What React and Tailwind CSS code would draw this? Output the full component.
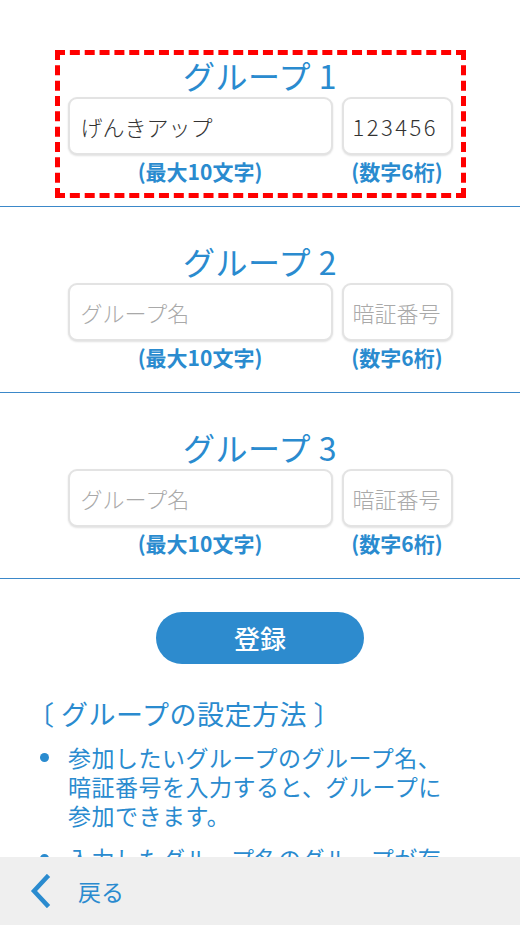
import React from "react";

const FONT = { fontFamily: '"Noto Sans CJK JP", "Noto Sans", sans-serif' };

function Group({ n, name, code, first, active }) {
  return (
    <section
      className={`${first ? "pt-[50px]" : "pt-[29px]"} pb-[8px] border-b border-[#3b88c9]`}
    >
      <div
        className={`mx-auto w-[411px] h-[148px] border-[5px] border-dashed ${
          active ? "border-[#ff0000]" : "border-transparent"
        } px-[8px] flex flex-col`}
      >
        <div className="h-[40px] leading-[40px] text-center text-[32px] text-[#2a8bcf] font-normal tracking-[0.5px]">
          グループ {n}
        </div>
        <div className="mt-[2px] flex gap-[9px]">
          <input
            readOnly
            defaultValue={name}
            placeholder="グループ名"
            className="w-[265px] h-[58px] rounded-[9px] border-2 border-[#e3e3e3] shadow-[0_1px_2px_rgba(0,0,0,0.12)] bg-white px-[11px] text-[22px] font-light text-[#333] placeholder:text-[#a9a9a9] outline-none"
            style={FONT}
          />
          <input
            readOnly
            defaultValue={code}
            placeholder="暗証番号"
            className="w-[111px] h-[58px] rounded-[9px] border-2 border-[#e3e3e3] shadow-[0_1px_2px_rgba(0,0,0,0.12)] bg-white pl-[9px] pr-[4px] text-[22px] font-light tracking-[2.5px] placeholder:tracking-normal text-[#333] placeholder:text-[#a9a9a9] outline-none"
            style={FONT}
          />
        </div>
        <div className="mt-[4px] flex gap-[9px] h-[24px] leading-[24px] text-[21px] font-bold text-[#2a8bcf]">
          <div className="w-[265px] text-center">(最大10文字)</div>
          <div className="w-[111px] text-center">(数字6桁)</div>
        </div>
      </div>
    </section>
  );
}

export default function App() {
  return (
    <div className="w-[520px] h-[925px] bg-white flex flex-col overflow-hidden" style={FONT}>
      <div className="flex-1 overflow-hidden">
        <Group n={1} name="げんきアップ" code="123456" first active />
        <Group n={2} name="" code="" />
        <Group n={3} name="" code="" />
        <div className="mt-[33px] flex justify-center">
          <button className="w-[208px] h-[52px] rounded-full bg-[#2d8bce] text-white text-[26px] font-medium leading-none">
            登録
          </button>
        </div>
        <h2 className="mt-[32px] pl-[27px] h-[36px] leading-[36px] text-[27px] tracking-[0.5px] text-[#2a8bcf] font-normal">
          〔 グループの設定方法 〕
        </h2>
        <ul className="mt-[11px] pl-[40px] pr-[20px] text-[23px] leading-[29px] text-[#2a8bcf] flex flex-col gap-[14px]">
          <li className="flex">
            <span className="mt-[10px] w-[9px] h-[9px] rounded-full bg-[#2a8bcf] shrink-0" />
            <span className="ml-[19px] tracking-[0.5px]">
              参加したいグループのグループ名、
              <br />
              暗証番号を入力すると、グループに
              <br />
              参加できます。
            </span>
          </li>
          <li className="flex">
            <span className="mt-[10px] w-[9px] h-[9px] rounded-full bg-[#2a8bcf] shrink-0" />
            <span className="ml-[19px] tracking-[0.5px]">
              入力したグループ名のグループが存
              <br />
              在しない場合は、新しくグループが
              <br />
              作成されます。
            </span>
          </li>
        </ul>
      </div>
      <div className="h-[68px] shrink-0 bg-[#efefef] flex items-center pl-[29px]">
        <svg width="22" height="34" viewBox="0 0 22 34" className="shrink-0">
          <path d="M18 3 L5 17 L18 31" fill="none" stroke="#2a8bcf" strokeWidth="4.5" strokeLinecap="square" />
        </svg>
        <span className="ml-[27px] text-[23px] text-[#2a8bcf]">戻る</span>
      </div>
    </div>
  );
}
